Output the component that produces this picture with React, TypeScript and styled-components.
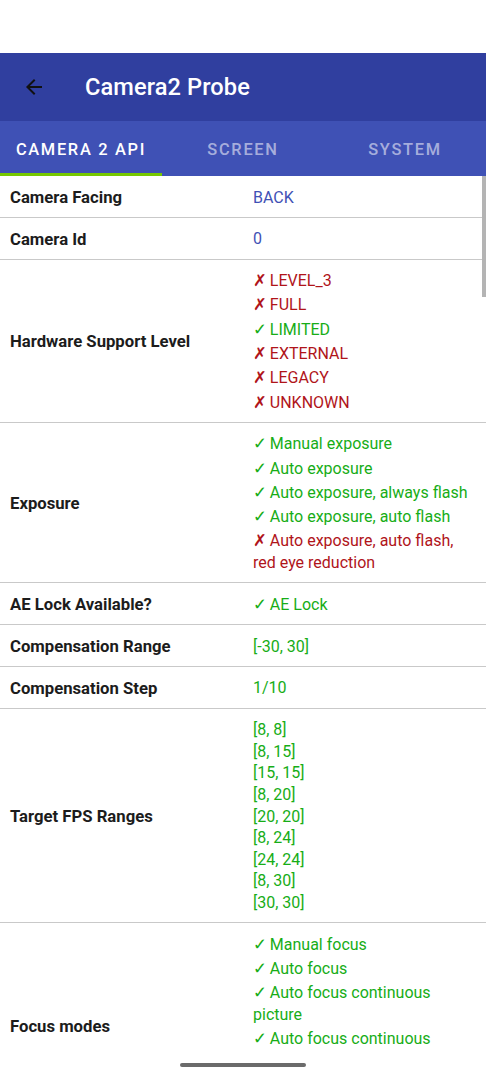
import React from "react";
import styled, { createGlobalStyle } from "styled-components";

const Global = createGlobalStyle`
  html, body { margin: 0; padding: 0; background: #ffffff; }
  body { font-family: Roboto, "Noto Sans", Arial, sans-serif; overflow: hidden; }
`;

const Screen = styled.div`
  width: 486px;
  height: 1080px;
  display: flex;
  flex-direction: column;
  background: #fff;
  overflow: hidden;
`;

const StatusBar = styled.div`
  height: 53px;
  background: #ffffff;
  flex-shrink: 0;
`;

const AppBar = styled.header`
  height: 68px;
  background: #303f9f;
  display: flex;
  align-items: center;
  padding-left: 21px;
  gap: 38px;
  flex-shrink: 0;
`;

const BackButton = styled.div`
  width: 26px;
  height: 26px;
  display: flex;
  align-items: center;
  justify-content: center;
`;

const Title = styled.h1`
  margin: 0;
  color: #ffffff;
  font-family: Roboto, sans-serif;
  font-weight: 500;
  font-size: 23.6px;
  letter-spacing: 0.1px;
`;

const Tabs = styled.nav`
  height: 55px;
  background: #3f51b5;
  display: grid;
  grid-template-columns: repeat(3, 1fr);
  flex-shrink: 0;
`;

const Tab = styled.div<{ $active?: boolean }>`
  display: flex;
  align-items: center;
  justify-content: center;
  font-family: Roboto, sans-serif;
  font-weight: 500;
  font-size: 16.4px;
  letter-spacing: 1.7px;
  color: ${(p) => (p.$active ? "#ffffff" : "rgba(255,255,255,0.55)")};
  position: relative;
  padding-top: 1px;
  &::after {
    content: "";
    position: absolute;
    left: 0;
    right: 0;
    bottom: 0;
    height: 3px;
    background: ${(p) => (p.$active ? "#76c800" : "transparent")};
  }
`;

const Content = styled.div`
  flex: 1;
  overflow: hidden;
  position: relative;
`;

const ScrollThumb = styled.div`
  position: absolute;
  right: 0;
  top: 0;
  width: 4px;
  height: 121px;
  background: #b4b4b4;
`;

const Row = styled.div`
  display: grid;
  grid-template-columns: 243px 1fr;
  align-items: center;
  padding: 9.6px 10px 9.6px 10px;
  border-bottom: 1px solid #c9c9c9;
`;

const Label = styled.div`
  font-family: Roboto, sans-serif;
  font-weight: 700;
  font-size: 16.7px;
  color: #1c1c1c;
  padding-top: 2px;
`;

const Values = styled.div`
  display: flex;
  flex-direction: column;
  gap: 2.7px;
  padding-right: 5px;
`;

type Tone = "info" | "ok" | "bad";

const Value = styled.div<{ $tone: Tone }>`
  font-family: Roboto, sans-serif;
  font-size: 16px;
  line-height: 21.6px;
  padding-top: 1px;
  margin-bottom: -1px;
  color: ${(p) =>
    p.$tone === "info" ? "#3f51b5" : p.$tone === "ok" ? "#17ad17" : "#b0141a"};
`;

const Mark = styled.span`
  font-family: "DejaVu Sans", sans-serif;
  font-weight: 700;
  font-size: 16.5px;
  line-height: 0;
  margin-right: 3px;
`;

const Multi = styled(Value)`
  white-space: pre-line;
`;

const NavBar = styled.div`
  height: 28px;
  flex-shrink: 0;
  background: #ffffff;
  display: flex;
  justify-content: center;
  padding-top: 11px;
  box-sizing: border-box;
`;

const HomeHandle = styled.div`
  width: 126px;
  height: 4px;
  border-radius: 2px;
  background: #6b6b6b;
`;

type Item = { t: string; tone: Tone; mark?: string };
const ok = (t: string): Item => ({ t, tone: "ok", mark: "\u2713" });
const bad = (t: string): Item => ({ t, tone: "bad", mark: "\u2717" });

const rows: { label: string; items?: Item[]; multi?: Item }[] = [
  { label: "Camera Facing", items: [{ t: "BACK", tone: "info" }] },
  { label: "Camera Id", items: [{ t: "0", tone: "info" }] },
  {
    label: "Hardware Support Level",
    items: [bad("LEVEL_3"), bad("FULL"), ok("LIMITED"), bad("EXTERNAL"), bad("LEGACY"), bad("UNKNOWN")],
  },
  {
    label: "Exposure",
    items: [
      ok("Manual exposure"),
      ok("Auto exposure"),
      ok("Auto exposure, always flash"),
      ok("Auto exposure, auto flash"),
      bad("Auto exposure, auto flash, red eye reduction"),
    ],
  },
  { label: "AE Lock Available?", items: [ok("AE Lock")] },
  { label: "Compensation Range", items: [{ t: "[-30, 30]", tone: "ok" }] },
  { label: "Compensation Step", items: [{ t: "1/10", tone: "ok" }] },
  {
    label: "Target FPS Ranges",
    multi: {
      t: "[8, 8]\n[8, 15]\n[15, 15]\n[8, 20]\n[20, 20]\n[8, 24]\n[24, 24]\n[8, 30]\n[30, 30]",
      tone: "ok",
    },
  },
  {
    label: "Focus modes",
    items: [
      ok("Manual focus"),
      ok("Auto focus"),
      ok("Auto focus continuous picture"),
      ok("Auto focus continuous video"),
      ok("Auto focus EDOF"),
      ok("Auto focus macro"),
    ],
  },
];

export default function App() {
  return (
    <>
      <Global />
      <Screen>
        <StatusBar />
        <AppBar>
          <BackButton>
            <svg width="24" height="24" viewBox="0 0 24 24">
              <path d="M20 11H7.83l5.59-5.59L12 4l-8 8 8 8 1.41-1.41L7.83 13H20v-2z" fill="#111" />
            </svg>
          </BackButton>
          <Title>Camera2 Probe</Title>
        </AppBar>
        <Tabs>
          <Tab $active>CAMERA 2 API</Tab>
          <Tab>SCREEN</Tab>
          <Tab>SYSTEM</Tab>
        </Tabs>
        <Content>
          {rows.map((r) => (
            <Row key={r.label}>
              <Label>{r.label}</Label>
              <Values>
                {r.items?.map((it, i) => (
                  <Value key={i} $tone={it.tone}>
                    {it.mark && <Mark>{it.mark}</Mark>}
                    {it.t}
                  </Value>
                ))}
                {r.multi && <Multi $tone={r.multi.tone}>{r.multi.t}</Multi>}
              </Values>
            </Row>
          ))}
          <ScrollThumb />
        </Content>
        <NavBar>
          <HomeHandle />
        </NavBar>
      </Screen>
    </>
  );
}
